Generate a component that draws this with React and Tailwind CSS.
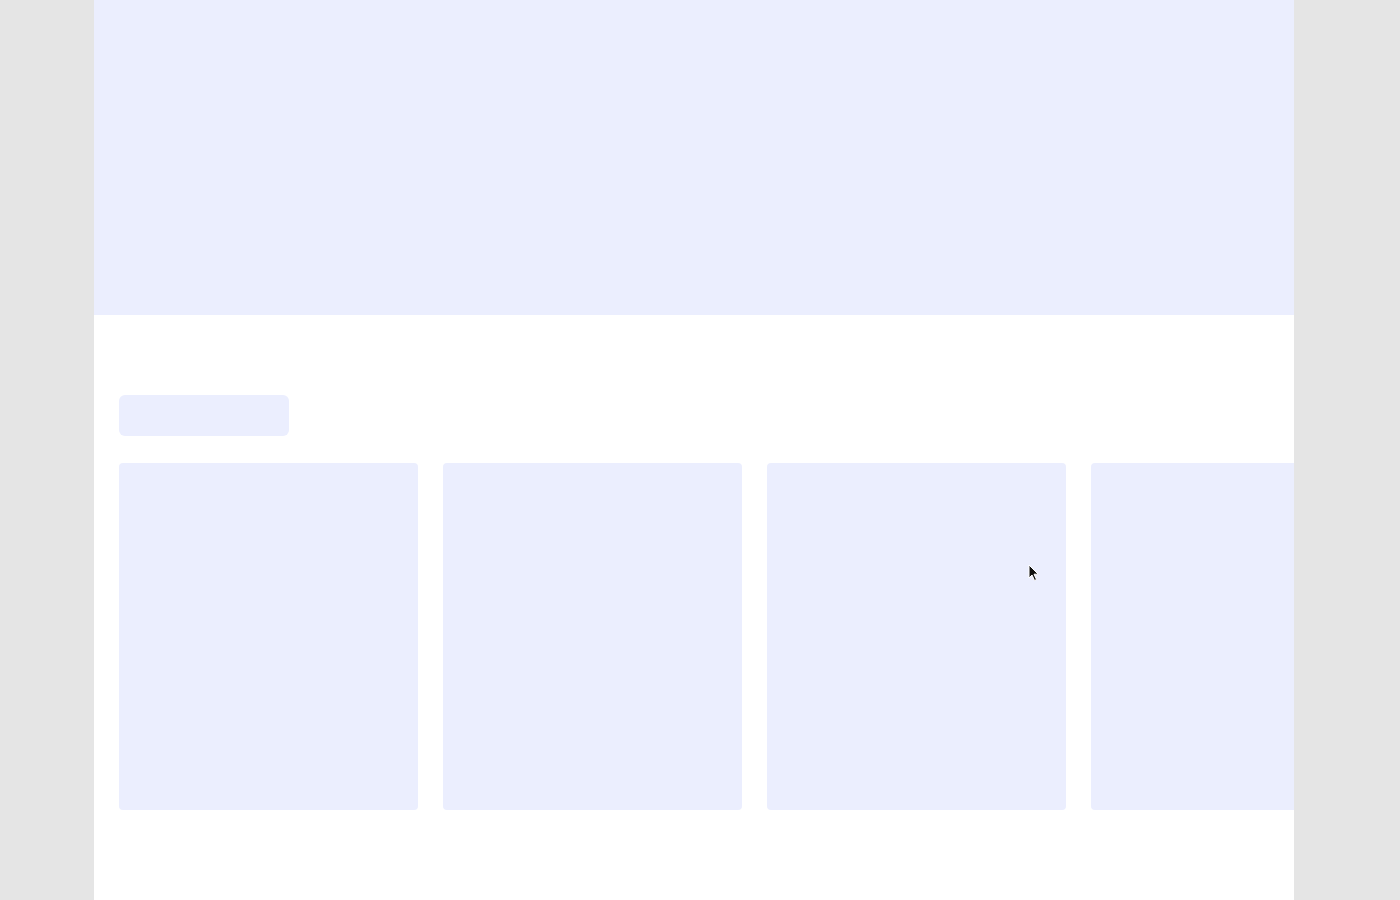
import React from 'react';

// Skeleton placeholder for a loading home page
const Block = ({ className = '' }) => (
  <div className={`bg-[#ebeefe] ${className}`} />
);

const Cursor = () => (
  <svg
    className="absolute left-[1028px] top-[564px]"
    width="12"
    height="18"
    viewBox="0 0 12 18"
  >
    <path
      d="M1 1 L1 14 L4 11 L6.5 16.5 L8.5 15.5 L6 10.2 L10.2 10.2 Z"
      fill="#111"
      stroke="#fff"
      strokeWidth="1"
      strokeLinejoin="round"
    />
  </svg>
);

export default function App() {
  return (
    <div className="relative h-[900px] w-full overflow-hidden bg-[#e5e5e5] pr-3 font-['Liberation_Sans',sans-serif]">
      <div className="mx-auto flex h-full w-[1200px] flex-col bg-white">
        <Block className="h-[315px] w-full" />
        <div className="flex flex-col overflow-hidden pl-[25px] pt-[80px]">
          <Block className="h-[41px] w-[170px] rounded-md" />
          <div className="mt-[27px] flex gap-[25px]">
            {[0, 1, 2, 3].map((i) => (
              <Block key={i} className="h-[347px] w-[299px] shrink-0 rounded" />
            ))}
          </div>
        </div>
      </div>
      <Cursor />
    </div>
  );
}
